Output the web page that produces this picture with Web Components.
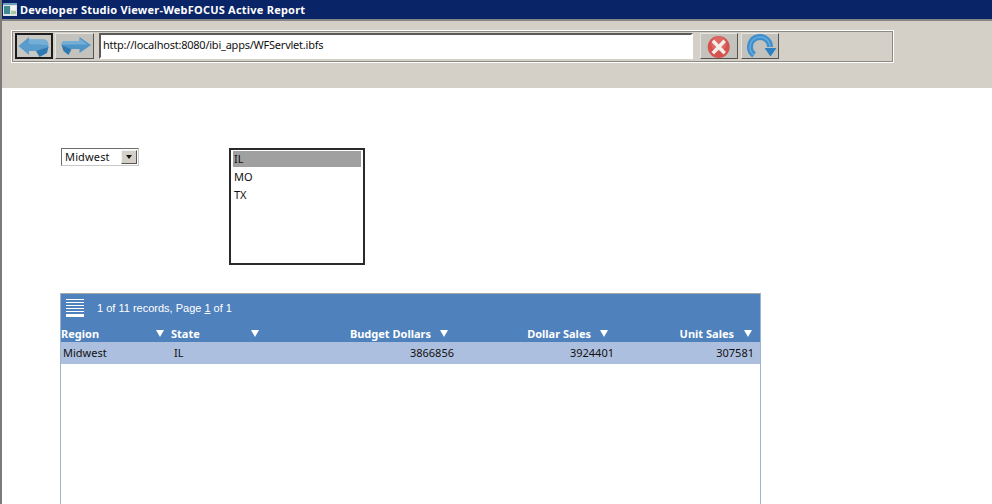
<!DOCTYPE html>
<html><head><meta charset="utf-8">
<style>
html,body{margin:0;padding:0;background:#fff}
body{width:992px;height:504px;overflow:hidden;font-family:"Noto Sans","DejaVu Sans",sans-serif}
</style></head><body>
<app-window>
  <title-bar>Developer Studio Viewer-WebFOCUS Active Report</title-bar>
  <nav-toolbar url="http://localhost:8080/ibi_apps/WFServlet.ibfs"></nav-toolbar>
  <report-page>
    <div slot="filters" style="display:contents">
      <combo-box value="Midwest"></combo-box>
      <list-box items="IL,MO,TX" selected="0"></list-box>
    </div>
    <report-table slot="table"></report-table>
  </report-page>
</app-window>
<script>
const def=(name,html,init)=>customElements.define(name,class extends HTMLElement{
  constructor(){super();this.attachShadow({mode:'open'})}
  connectedCallback(){this.shadowRoot.innerHTML=typeof html==='function'?html(this):html;init&&init(this)}
});

def('app-window',`<style>:host{display:flex;flex-direction:column;width:992px;height:504px;overflow:hidden;background:#fff;border-left:2px solid #7d7b78;box-sizing:border-box}
</style><slot></slot>`);

def('title-bar',`<style>:host{display:flex;align-items:center;gap:3px;height:21px;box-sizing:border-box;margin-left:-2px;padding:0 0 0 3px;background:#0a2468;color:#fff;
font:bold 11px "Noto Sans",sans-serif;border-bottom:2px solid #858585;white-space:nowrap}
span{letter-spacing:.22px}
svg{display:block;flex:none}</style>
<svg width="14" height="13" viewBox="0 0 14 13"><rect width="14" height="13" fill="#dfe5e3"/><rect x="0" y="0" width="14" height="2" fill="#6f9fc0"/><rect x="1" y="3" width="6" height="8" fill="#3f8a92"/><rect x="8" y="3" width="5" height="4" fill="#f2f5f2"/><rect x="8" y="8" width="5" height="3" fill="#a8c8a0"/></svg>
<span><slot></slot></span>`);

def('tool-button',h=>`<style>:host{display:block;flex:none;box-sizing:border-box;width:${h.getAttribute('w')||38}px;height:26px;background:#c4c2bd;
border:1px solid;border-color:#e6e4df #55534f #55534f #e6e4df;position:relative}
:host([active]){border:2px solid #1c1c1c;background:#c9c7c2}
svg{display:block;position:absolute;left:50%;top:50%;transform:translate(-50%,-50%)}</style><slot></slot>`);

def('nav-toolbar',h=>`<style>:host{display:block;box-sizing:border-box;height:67px;padding:9px 0 0 9px;background:#d4d0c8}
.bar{box-sizing:border-box;width:883px;height:33px;display:flex;align-items:flex-start;padding:2px 0 0 3px;
border:1px solid #fff;outline:1px solid #8c8a85;outline-offset:-2px}
.url{box-sizing:border-box;width:594px;height:26px;margin:0 7px 0 5px;background:#fff;border:2px solid;border-color:#5a5a5a #fff #fff #5a5a5a;
font:11px "Noto Sans",sans-serif;letter-spacing:-.23px;color:#111;padding:2px 0 0 2px;line-height:16px;white-space:nowrap}
.b2{margin-left:2px}.b3{margin-left:3px}</style>
<div class="bar">
<tool-button active w="38"><svg width="36" height="24" viewBox="16 34 36 24">
<path d="M17.500 45 28 36V38.500H42C46 38.500 47.500 41 47.500 47L38 50H28V54Z" fill="#5a9ccb"/>
<path d="M28 38.500H42C46 38.500 47.500 41 47.500 44L28 43Z" fill="#76afd6"/>
<path d="M35 50 47.500 46 46 52 38.500 56Z" fill="#2f78b0"/></svg></tool-button>
<tool-button class="b2" w="39"><svg width="36" height="24" viewBox="56.500 34 36 24">
<path d="M91.500 45 80 37V41H66C63 41 62 43 62 45L67 49H80V53Z" fill="#4f96c8"/>
<path d="M66 41H80V38.500L88 44.500H62C62 43 63 41 66 41Z" fill="#74aed4"/>
<path d="M62 45 72 49.500 69 55 64 51Z" fill="#2f78b0"/></svg></tool-button>
<div class="url">${h.getAttribute('url')}</div>
<tool-button w="38"><svg width="36" height="24" viewBox="701 34 36 24">
<circle cx="718.700" cy="47" r="11" fill="#d6524e"/><circle cx="718.700" cy="44" r="7.500" fill="#e48480" opacity=".45"/>
<path d="M714 42 723.500 52M723.500 42 714 52" stroke="#f4eeea" stroke-width="3.500" stroke-linecap="square"/></svg></tool-button>
<tool-button class="b3" w="38"><svg width="36" height="24" viewBox="742 34 36 24">
<path d="M754 55A10 10 0 1 1 770 47" fill="none" stroke="#3e8fcd" stroke-width="6"/>
<path d="M754 55A10 10 0 1 1 770 47" fill="none" stroke="#6fb2e0" stroke-width="1.500" opacity=".8"/>
<path d="M764.500 48H776.500L770.500 56.500Z" fill="#2f80c0"/></svg></tool-button>
</div>`);

def('report-page',`<style>:host{display:block;flex:1;min-height:0;padding:60px 0 0 58px;box-sizing:border-box}
.filters{display:flex;align-items:flex-start;gap:90px;height:117px;margin:0 0 28px 1px}</style>
<div class="filters"><slot name="filters"></slot></div><slot name="table"></slot>`);

def('combo-box',h=>`<style>:host{display:flex;flex:none;box-sizing:border-box;width:78px;height:18px;border:1px solid;border-color:#6d6d6d #c8c8c8 #c8c8c8 #6d6d6d;background:#fff;
font:11px "Noto Sans",sans-serif;letter-spacing:.15px;color:#111}
.v{flex:1;padding-left:3px;line-height:16px}
.b{width:16px;height:14px;margin:1px;background:#d4d0c8;border:1px solid;border-color:#f2f0ec #555 #555 #f2f0ec;box-sizing:border-box;display:flex;align-items:center;justify-content:center}
i{width:0;height:0;border:3.500px solid transparent;border-top:4px solid #111;border-bottom:0}</style>
<div class="v">${h.getAttribute('value')}</div><div class="b"><i></i></div>`);

def('list-box',h=>{const s=+h.getAttribute('selected');return `<style>:host{display:block;flex:none;box-sizing:border-box;width:136px;height:117px;border:2px solid #2a2a2a;padding:1px 2px;background:#fff;
font:11px "Noto Sans",sans-serif;color:#111}
div{height:16px;line-height:16px;margin-bottom:2px;padding-left:1px}.s{background:#a0a0a0}</style>`+
h.getAttribute('items').split(',').map((t,i)=>`<div class="${i===s?'s':''}">${t}</div>`).join('')});

def('report-table',`<style>:host{display:block;box-sizing:border-box;width:701px;height:230px;border:solid #9db4cc;border-width:1px 1px 0 1px;background:#fff;border-top-color:#a8a8a8;
font:11px "Noto Sans",sans-serif}
.tools{display:flex;align-items:center;height:29px;background:#4f81bd;color:#fff;gap:13px;padding-left:5px}
.tools span{font:11px "Liberation Sans",sans-serif;line-height:28px;height:29px}
.tools u{text-underline-offset:1px}
.g{display:grid;grid-template-columns:110px 90px 199px 160px 140px}
.head{height:19px;background:#4f81bd;color:#fff;font-weight:bold;line-height:22px}
.head>div{display:flex;justify-content:space-between;box-sizing:border-box;white-space:nowrap;height:19px}
.head>.r{justify-content:flex-end;gap:9px}
.head i{flex:none;width:0;height:0;border:4px solid transparent;border-top:7px solid #fff;border-bottom:0;margin-top:7px}
.row{height:22px;line-height:22px;background:#adbfdf;color:#111}
.row>div{padding-left:2px}.row>.r{text-align:right;padding-right:6px}
.row>div:nth-child(2){padding-left:3px}
svg{display:block;flex:none}</style>
<div class="tools"><svg width="18" height="19" viewBox="0 0 18 19" fill="#fff"><rect width="18" height="1" y="0"/><rect width="18" height="1" y="3"/><rect width="18" height="1" y="6"/><rect width="18" height="1" y="9"/><rect width="18" height="1" y="12"/><rect width="18" height="3" y="15"/></svg>
<span>1 of 11 records, Page <u>1</u> of 1</span></div>
<div class="g head"><div style="padding-right:7px">Region<i></i></div><div style="padding-right:2px">State<i></i></div><div class="r" style="padding-right:12px">Budget Dollars<i></i></div><div class="r" style="padding-right:12px">Dollar Sales<i></i></div><div class="r" style="padding-right:8px;gap:10px">Unit Sales<i></i></div></div>
<div class="g row"><div>Midwest</div><div>IL</div><div class="r">3866856</div><div class="r">3924401</div><div class="r">307581</div></div>`);
</script>
</body></html>
